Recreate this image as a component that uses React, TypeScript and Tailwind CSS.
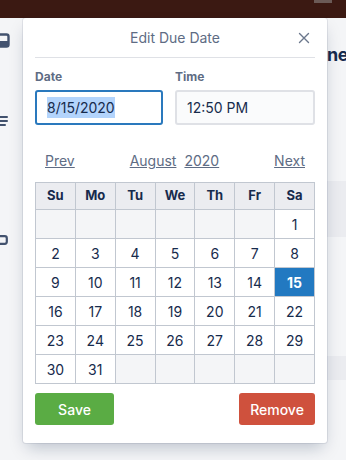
import React from 'react';

const days = ['Su', 'Mo', 'Tu', 'We', 'Th', 'Fr', 'Sa'];

const weeks: (number | null)[][] = [
  [null, null, null, null, null, null, 1],
  [2, 3, 4, 5, 6, 7, 8],
  [9, 10, 11, 12, 13, 14, 15],
  [16, 17, 18, 19, 20, 21, 22],
  [23, 24, 25, 26, 27, 28, 29],
  [30, 31, null, null, null, null, null],
];

function Background() {
  return (
    <div className="flex h-[442px] bg-[#f4f5f7]">
      {/* left sidebar icons, mostly hidden under the modal */}
      <div className="w-[23px] flex flex-col text-[#42526e]">
        <svg className="mt-[15px] -ml-[6px]" width="16" height="15" viewBox="0 0 16 15" fill="none">
          <rect x="1.5" y="1.5" width="13" height="12" rx="2" stroke="currentColor" strokeWidth="2.4" />
          <rect x="2" y="8" width="12" height="5" fill="currentColor" />
        </svg>
        <svg className="mt-[67px] -ml-[8px]" width="16" height="14" viewBox="0 0 16 14" fill="currentColor">
          <rect x="0" y="1" width="16" height="2" rx="1" />
          <rect x="0" y="5" width="16" height="2" rx="1" />
          <rect x="0" y="9" width="14" height="2" rx="1" />
          <rect x="0" y="12" width="8" height="2" rx="1" />
        </svg>
        <svg className="mt-[106px] -ml-[6px]" width="14" height="10" viewBox="0 0 14 10" fill="none">
          <rect x="1.2" y="1.2" width="11.6" height="7.6" rx="2" stroke="currentColor" strokeWidth="2.2" />
        </svg>
      </div>
      <div className="flex-1" />
      <div className="w-[19px] flex flex-col">
        <div className="mt-[27px] h-[20px] text-[18px] leading-[20px] font-bold tracking-[-0.5px] text-[#172b4d] whitespace-nowrap">
          ne
        </div>
        <div className="mt-[116px] h-[56px] bg-[#ebecf0]" />
        <div className="mt-[119px] h-[24px] bg-[#ebecf0]" />
      </div>
    </div>
  );
}

export default function App() {
  return (
    <div className="relative w-[346px] h-[460px] overflow-hidden bg-[#f4f5f7] font-['Inter',sans-serif]">
      <div className="h-[18px] bg-[#3b1912] flex justify-end">
        <div className="mr-[14px] w-[18px] h-[3px] bg-[#6b5a56]" />
      </div>
      <Background />

      <div className="absolute left-[23px] top-[18px] w-[304px] h-[425px] bg-white rounded-[3px] shadow-[0_8px_16px_-4px_rgba(9,30,66,0.25),0_0_0_1px_rgba(9,30,66,0.08)] px-3">
        <div className="relative h-10 flex items-center justify-center border-b border-[#dfe1e6]">
          <span className="text-[14px] text-[#5e6c84]">Edit Due Date</span>
          <svg className="absolute right-[5px] top-[14px]" width="12" height="12" viewBox="0 0 12 12" stroke="#6b778c" strokeWidth="1.4" strokeLinecap="round">
            <path d="M1.5 1.5 L10.5 10.5 M10.5 1.5 L1.5 10.5" />
          </svg>
        </div>

        <div className="flex gap-3 mt-[11px]">
          <div className="w-[128px]">
            <div className="text-[12px] leading-4 font-bold text-[#5e6c84] mb-[5px]">Date</div>
            <div className="h-[35px] border-2 border-[#2a79bd] rounded-[3px] bg-white flex items-center pl-[10px] text-[14px] text-[#172b4d]">
              <span className="bg-[#b3d4fc]">8/15/2020</span>
            </div>
          </div>
          <div className="w-[140px]">
            <div className="text-[12px] leading-4 font-bold text-[#5e6c84] mb-[5px]">Time</div>
            <div className="h-[35px] border-2 border-[#dfe1e6] rounded-[3px] bg-[#fafbfc] flex items-center pl-[10px] text-[14px] text-[#172b4d]">
              12:50 PM
            </div>
          </div>
        </div>

        <div className="flex items-center justify-between px-[10px] mt-[25px] h-5 text-[14px] text-[#5e6c84]">
          <span className="underline">Prev</span>
          <span className="flex gap-2">
            <span className="underline">August</span>
            <span className="underline">2020</span>
          </span>
          <span className="underline">Next</span>
        </div>

        <table className="mt-[12px] w-[280px] border-collapse table-fixed">
          <thead>
            <tr>
              {days.map((d) => (
                <th key={d} className="h-[27px] p-0 border border-[#c1c7d0] bg-[#ebecf0] text-[13px] font-bold text-[#172b4d]">
                  {d}
                </th>
              ))}
            </tr>
          </thead>
          <tbody>
            {weeks.map((w, i) => (
              <tr key={i}>
                {w.map((d, j) => {
                  const sel = d === 15;
                  return (
                    <td
                      key={j}
                      className={
                        'h-[29px] p-0 border border-[#c1c7d0] text-center text-[14px] ' +
                        (d === null
                          ? 'bg-[#f4f5f7]'
                          : sel
                          ? 'bg-[#2279c1] text-white font-bold'
                          : 'bg-white text-[#172b4d]')
                      }
                    >
                      {d}
                    </td>
                  );
                })}
              </tr>
            ))}
          </tbody>
        </table>

        <div className="flex justify-between mt-[9px]">
          <button className="w-[79px] h-[32px] rounded-[3px] bg-[#5aac44] text-white text-[14px] font-medium">
            Save
          </button>
          <button className="w-[76px] h-[32px] rounded-[3px] bg-[#cf513d] text-white text-[14px] font-medium">
            Remove
          </button>
        </div>
      </div>
    </div>
  );
}
